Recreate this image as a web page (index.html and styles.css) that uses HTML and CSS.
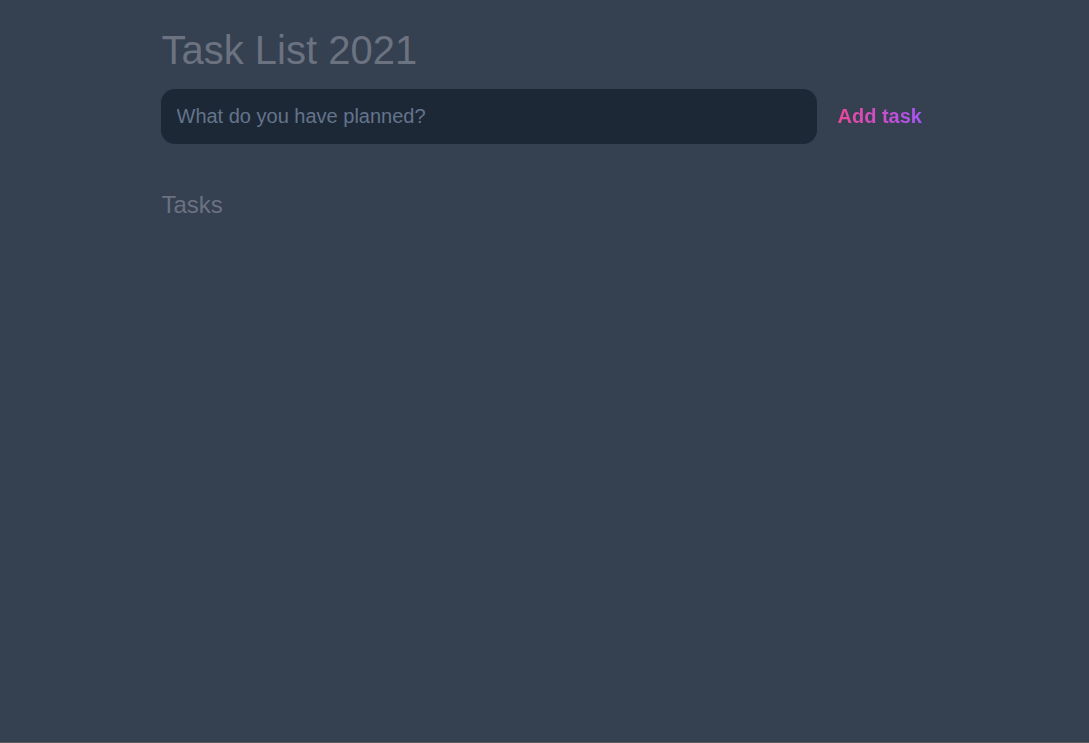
FILE: index.html
```html
<!DOCTYPE html>
<html lang="en">
<head>
<meta charset="utf-8">
<title>Task List 2021</title>
<link rel="stylesheet" href="styles.css">
</head>
<body>
<div class="page">
  <main class="container">
    <h1 class="title">Task List 2021</h1>
    <form class="new-task" onsubmit="return false">
      <input class="task-input" type="text" placeholder="What do you have planned?">
      <button class="add-btn" type="submit"><span class="gradient-text">Add task</span></button>
    </form>
    <section class="tasks">
      <h2 class="tasks-title">Tasks</h2>
    </section>
  </main>
</div>
</body>
</html>
```

FILE: styles.css
```css
html {
  background: #5a5d62;
}
body {
  margin: 0;
  font-family: "Liberation Sans", Arial, sans-serif;
}
.page {
  background: #354051;
  min-height: 742px;
}
.container {
  max-width: 768px;
  margin: 0 auto;
  padding-top: 28px;
}
.title {
  margin: 0 0 0 1px;
  font-size: 40px;
  font-weight: 400;
  line-height: 44px;
  color: #6b7280;
}
.new-task {
  display: flex;
  align-items: center;
  margin-top: 17px;
}
.task-input {
  width: 656px;
  height: 55px;
  box-sizing: border-box;
  border: none;
  outline: none;
  border-radius: 14px;
  background: #1d2837;
  padding: 0 16px;
  font-family: inherit;
  font-size: 20px;
  color: #d1d5db;
}
.task-input::placeholder {
  color: #64748b;
}
.add-btn {
  background: none;
  border: none;
  padding: 0 0 0 21px;
  font-family: inherit;
  font-size: 20px;
  font-weight: 700;
  cursor: pointer;
}
.gradient-text {
  background: linear-gradient(to right, #ec4899, #a855f7);
  -webkit-background-clip: text;
  background-clip: text;
  color: transparent;
}
.tasks {
  margin-top: 48px;
}
.tasks-title {
  margin: 0 0 0 1px;
  font-size: 24px;
  font-weight: 400;
  line-height: 26px;
  color: #6b7280;
}
```
